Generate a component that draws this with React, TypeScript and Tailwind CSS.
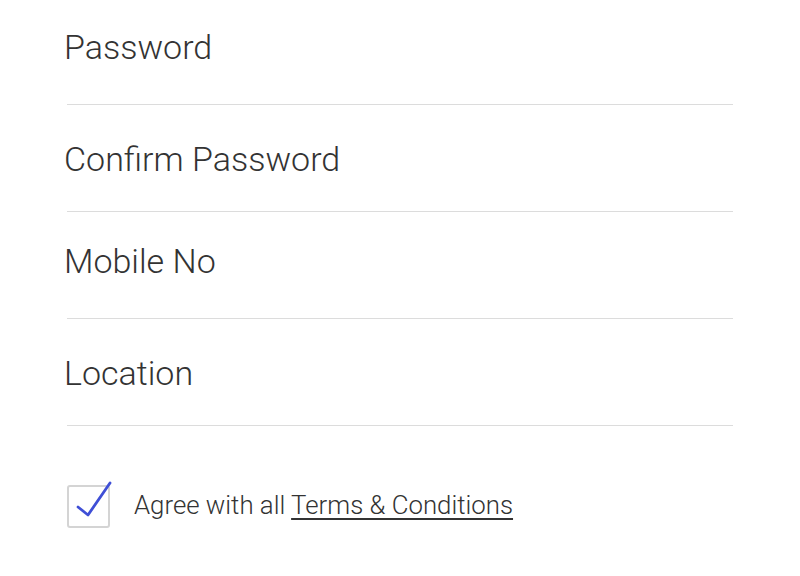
import React from "react";

const fields = [
  { label: "Password", pad: "pt-[27px] pb-[37px]" },
  { label: "Confirm Password", pad: "pt-[34px] pb-[32px]" },
  { label: "Mobile No", pad: "pt-[29px] pb-[37px]" },
  { label: "Location", pad: "pt-[34px] pb-[32px]" },
];

export default function App() {
  return (
    <div
      className="w-[800px] h-[576px] bg-white overflow-hidden text-[#333333]"
      style={{ fontFamily: "Roboto, 'Liberation Sans', sans-serif" }}
    >
      <div className="mx-[67px]">
        {fields.map((f) => (
          <div key={f.label} className={`border-b border-[#dcdcdc] ${f.pad}`}>
            <div className="-ml-[3px] text-[34px] leading-[40px] font-light">{f.label}</div>
          </div>
        ))}

        <div className="flex items-start gap-[24px] mt-[59px]">
          <div className="relative w-[43px] h-[43px] shrink-0">
            <div className="absolute inset-0 border-2 border-[#d4d4d4] rounded-[3px]" />
            <svg
              className="absolute left-0 top-0 overflow-visible"
              width="43"
              height="43"
              viewBox="0 0 43 43"
              fill="none"
            >
              <path
                d="M11 22 L21 30 L43 -2"
                stroke="#3f4fd6"
                strokeWidth="2.8"
                strokeLinecap="round"
                strokeLinejoin="round"
              />
            </svg>
          </div>
          <div className="mt-[5px] text-[25.8px] leading-[30px] font-light text-[#333333]">
            Agree with all{" "}
            <span className="underline underline-offset-[4px] decoration-[1.5px]">Terms &amp; Conditions</span>
          </div>
        </div>
      </div>
    </div>
  );
}
